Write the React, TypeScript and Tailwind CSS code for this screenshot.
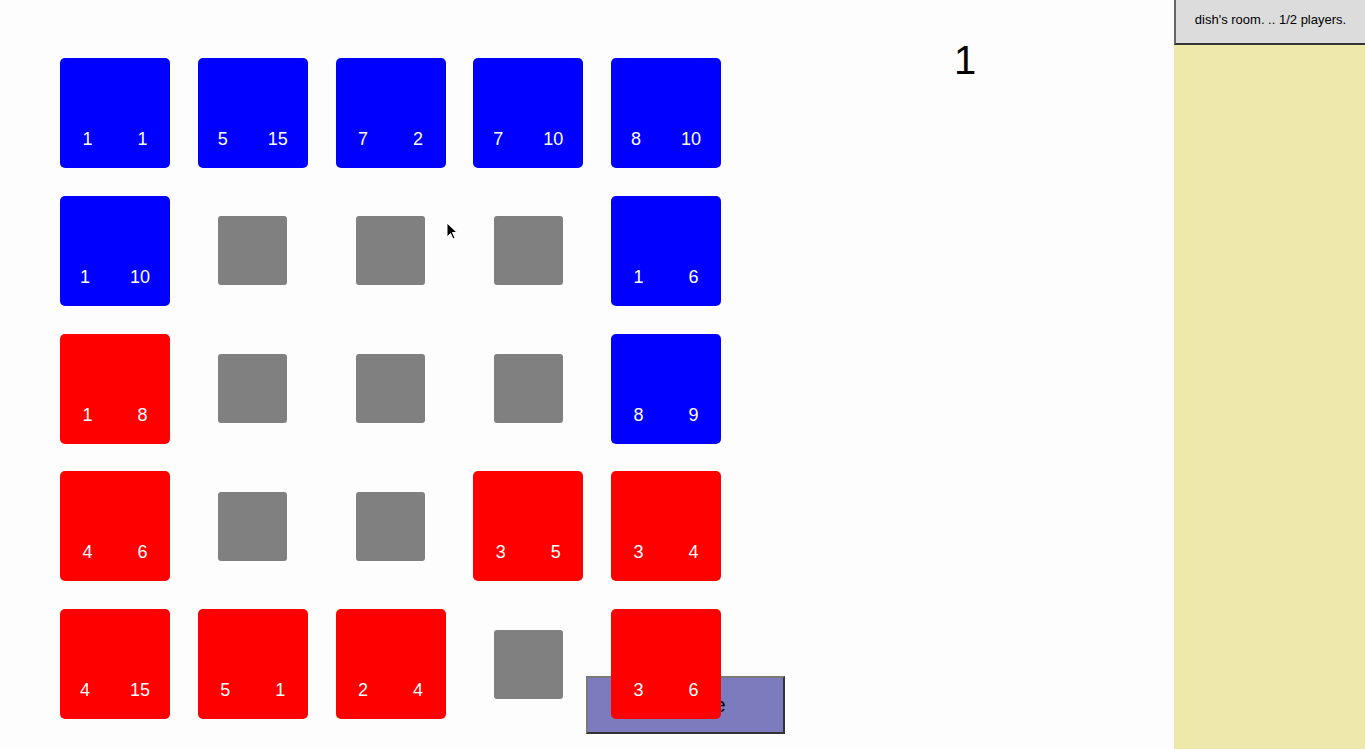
import React from "react";

type Cell = { c: "b" | "r" | "g"; a?: number; b?: number };

const B = (a: number, b: number): Cell => ({ c: "b", a, b });
const R = (a: number, b: number): Cell => ({ c: "r", a, b });
const G: Cell = { c: "g" };

const rows: Cell[][] = [
  [B(1, 1), B(5, 15), B(7, 2), B(7, 10), B(8, 10)],
  [B(1, 10), G, G, G, B(1, 6)],
  [R(1, 8), G, G, G, B(8, 9)],
  [R(4, 6), G, G, R(3, 5), R(3, 4)],
  [R(4, 15), R(5, 1), R(2, 4), G, R(3, 6)],
];

function CellView({ cell }: { cell: Cell }) {
  if (cell.c === "g") {
    return (
      <div className="relative z-10 flex h-[110px] w-[110px] items-center justify-center">
        <div className="h-[69px] w-[69px] rounded-[3px] bg-[#808080]" />
      </div>
    );
  }
  return (
    <div
      className={
        "relative z-10 flex h-[110px] w-[110px] items-end justify-around rounded-[5px] pb-[19px] text-[18px] leading-[20px] text-white " +
        (cell.c === "b" ? "bg-[#0000ff]" : "bg-[#ff0000]")
      }
    >
      <span>{cell.a}</span>
      <span>{cell.b}</span>
    </div>
  );
}

export default function App() {
  return (
    <div
      className="flex h-[749px] w-[1365px] overflow-hidden bg-[#fdfdfd]"
      style={{ fontFamily: '"Liberation Sans", Arial, sans-serif' }}
    >
      <div className="relative flex flex-1">
        <div className="flex flex-col gap-[27.75px] pl-[60px] pt-[58px]">
          {rows.map((r, i) => (
            <div key={i} className="flex gap-[27.75px]">
              {r.map((cell, j) => (
                <CellView key={j} cell={cell} />
              ))}
            </div>
          ))}
        </div>
        <div className="ml-[233px] pt-[37px] text-[40px] leading-[46px] text-black">1</div>
        <button className="absolute left-[586px] top-[676px] z-0 h-[58px] w-[199px] border-2 border-t-[#7a7a7a] border-l-[#7a7a7a] border-r-[#333] border-b-[#333] bg-[#7b7bbd] text-[20px] text-black">
          Continue
        </button>
        <svg
          className="absolute left-[446px] top-[222px] z-20"
          width="12"
          height="18"
          viewBox="0 0 12 18"
        >
          <path d="M1 1 L1 15 L4.5 11.5 L7 17 L9 16 L6.5 10.5 L11 10.5 Z" fill="#000" stroke="#fff" strokeWidth="1" />
        </svg>
      </div>
      <div className="flex w-[191px] flex-col bg-[#eee8aa]">
        <div className="flex h-[45px] items-center justify-center border-b-2 border-l-2 border-b-[#333] border-l-[#666] bg-[#dcdcdc] pb-[4px] text-[13px] text-black">
          dish's room. .. 1/2 players.
        </div>
      </div>
    </div>
  );
}
